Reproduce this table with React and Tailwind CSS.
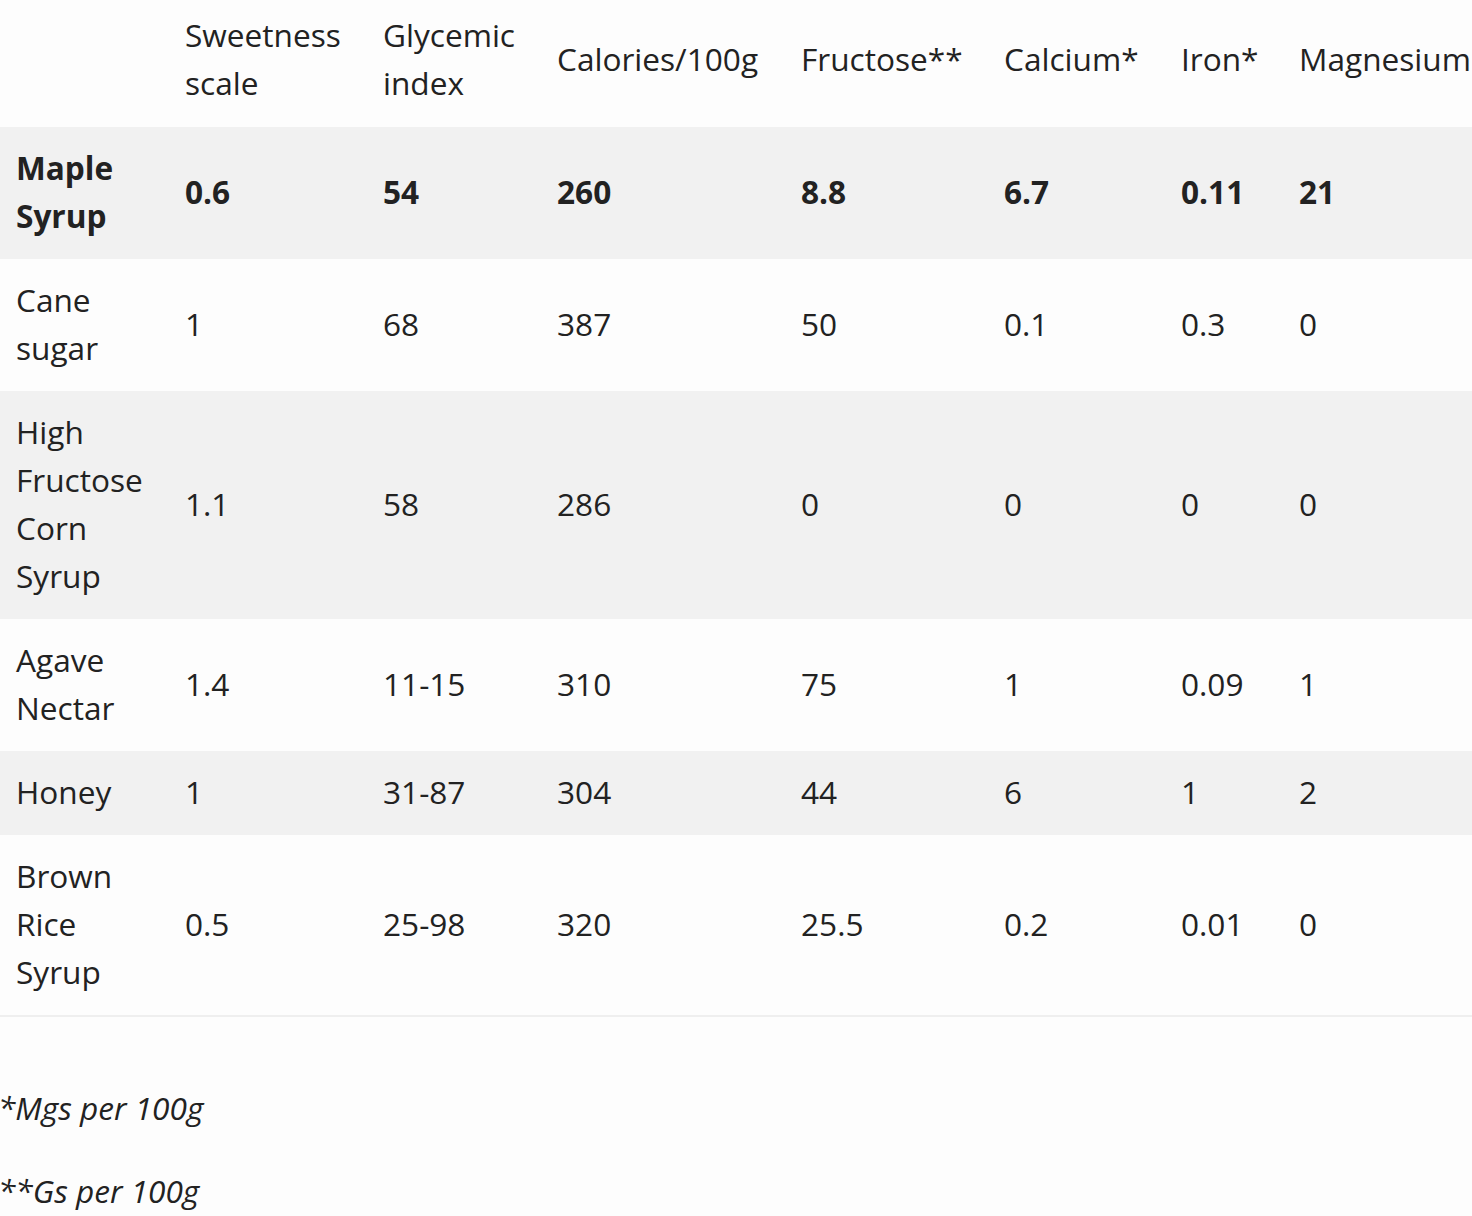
export default function App() {
  const rows = [
    ["Maple Syrup", "0.6", "54", "260", "8.8", "6.7", "0.11", "21"],
    ["Cane sugar", "1", "68", "387", "50", "0.1", "0.3", "0"],
    ["High Fructose Corn Syrup", "1.1", "58", "286", "0", "0", "0", "0"],
    ["Agave Nectar", "1.4", "11-15", "310", "75", "1", "0.09", "1"],
    ["Honey", "1", "31-87", "304", "44", "6", "1", "2"],
    ["Brown Rice Syrup", "0.5", "25-98", "320", "25.5", "0.2", "0.01", "0"],
  ];

  const headers = [
    "",
    "Sweetness scale",
    "Glycemic index",
    "Calories/100g",
    "Fructose**",
    "Calcium*",
    "Iron*",
    "Magnesium",
  ];

  return (
    <div
      className="w-[1472px] h-[1216px] overflow-hidden bg-[#fdfdfd] text-[#222] text-[31.6px] leading-[48px]"
      style={{ fontFamily: '"Open Sans", "Noto Sans", sans-serif' }}
    >
      <table className="w-[1500px] table-fixed border-collapse border-b-2 border-[#efefef]">
        <colgroup>
          <col className="w-[168px]" />
          <col className="w-[198px]" />
          <col className="w-[174px]" />
          <col className="w-[244px]" />
          <col className="w-[203px]" />
          <col className="w-[177px]" />
          <col className="w-[118px]" />
          <col className="w-[218px]" />
        </colgroup>
        <thead>
          <tr>
            {headers.map((h, i) => (
              <th
                key={i}
                className="text-left font-normal align-middle pl-[17px] pr-1 pt-[11px] pb-[20px]"
              >
                {i === 7 ? <span className="whitespace-nowrap">{h}</span> : h}
              </th>
            ))}
          </tr>
        </thead>
        <tbody>
          {rows.map((r, ri) => (
            <tr
              key={ri}
              className={
                (ri % 2 === 0 ? "bg-[#f1f1f1]" : "bg-[#fdfdfd]") +
                (ri === 0 ? " font-bold" : "")
              }
            >
              {r.map((c, ci) => (
                <td
                  key={ci}
                  className={
                    "align-middle pr-1 pt-[17px] pb-[19px] " +
                    (ci === 0 ? "pl-[16px]" : "pl-[17px]")
                  }
                >
                  {c}
                </td>
              ))}
            </tr>
          ))}
        </tbody>
      </table>

      <div className="italic mt-[67px]">
        <p className="-ml-[2px]">*Mgs per 100g</p>
        <p className="-ml-[2px] mt-[35px]">**Gs per 100g</p>
      </div>
    </div>
  );
}
